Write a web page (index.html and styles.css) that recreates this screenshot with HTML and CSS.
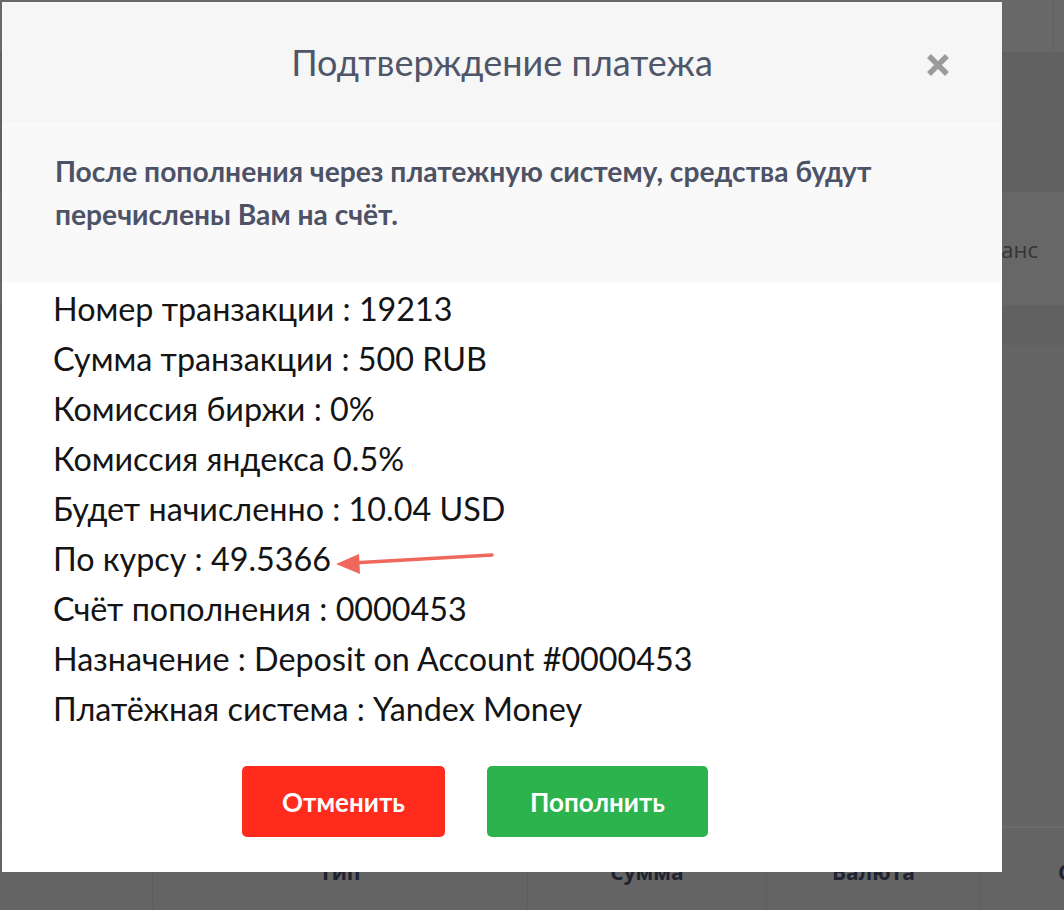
FILE: index.html
```html
<!DOCTYPE html>
<html lang="ru">
<head>
<meta charset="utf-8">
<title>Подтверждение платежа</title>
<link rel="stylesheet" href="styles.css">
</head>
<body>
<div class="page">
  <div class="topbar"><div class="topbar-cell"></div><div class="topbar-cell narrow"></div></div>
  <div class="band dark"></div>
  <div class="band light balance"><span class="balance-text">Баланс</span></div>
  <div class="band dark thin"></div>
  <div class="band mid"></div>
  <div class="table-head">
    <div class="th w1"></div>
    <div class="th w2">Тип</div>
    <div class="th w3">Сумма</div>
    <div class="th w4">Валюта</div>
    <div class="th w5">Статус</div>
  </div>
</div>

<div class="modal">
  <div class="modal-header">
    <h2 class="modal-title">Подтверждение платежа</h2>
    <svg class="modal-close" width="26" height="26" viewBox="0 0 26 26">
      <path d="M4 4 L22 22 M22 4 L4 22" stroke="#9b9b9b" stroke-width="5.5" stroke-linecap="butt"/>
    </svg>
  </div>
  <div class="modal-alert">
    После пополнения через платежную систему, средства будут<br>перечислены Вам на счёт.
  </div>
  <div class="modal-body">
    <div class="row">Номер транзакции : 19213</div>
    <div class="row">Сумма транзакции : 500 RUB</div>
    <div class="row">Комиссия биржи : 0%</div>
    <div class="row">Комиссия яндекса 0.5%</div>
    <div class="row">Будет начисленно : 10.04 USD</div>
    <div class="row">По курсу : 49.5366</div>
    <div class="row">Счёт пополнения : 0000453</div>
    <div class="row">Назначение : Deposit on Account #0000453</div>
    <div class="row">Платёжная система : Yandex Money</div>
  </div>
  <div class="modal-footer">
    <button class="btn btn-cancel">Отменить</button>
    <button class="btn btn-ok">Пополнить</button>
  </div>
  <svg class="arrow" width="180" height="30" viewBox="0 0 180 30">
    <line x1="160" y1="7" x2="20" y2="15" stroke="#f0685c" stroke-width="3.5" stroke-linecap="round"/>
    <polygon points="4,16 27,6 28,26" fill="#f0685c"/>
  </svg>
</div>
</body>
</html>
```

FILE: styles.css
```css
html, body {
  margin: 0;
  padding: 0;
}
body {
  width: 1064px;
  height: 910px;
  overflow: hidden;
  background: #656565;
  font-family: Lato, "Noto Sans", sans-serif;
  position: relative;
}
.page {
  display: flex;
  flex-direction: column;
  height: 910px;
}
.topbar {
  height: 52px;
  flex-shrink: 0;
  background: #686868;
  display: flex;
  justify-content: flex-end;
}
.topbar-cell {
  flex: 1;
}
.topbar-cell.narrow {
  flex: 0 0 10px;
  border-left: 1px solid #606060;
}
.band {
  height: 140px;
  flex-shrink: 0;
}
.band.dark { background: #616161; }
.band.light { background: #676767; height: 113px; }
.band.thin { height: 40px; }
.band.mid { background: #656565; flex: 1 1 auto; height: auto; }
.balance {
  display: flex;
  align-items: center;
  justify-content: flex-end;
  padding-right: 26px;
}
.balance-text {
  font-family: "Open Sans", sans-serif;
  font-size: 22px;
  color: #353535;
}
.table-head {
  height: 82px;
  flex-shrink: 0;
  display: flex;
  border-top: 2px solid #6b6b6b;
  background: #646464;
  overflow: hidden;
}
.th {
  flex-shrink: 0;
  box-sizing: border-box;
  border-right: 1px solid #5e5e5e;
  display: flex;
  justify-content: center;
  padding-top: 30px;
  font-family: "Open Sans", sans-serif;
  font-weight: 700;
  font-size: 21px;
  color: #1f2330;
  white-space: nowrap;
}
.w1 { width: 153px; }
.w2 { width: 375px; }
.w3 { width: 239px; }
.w4 { width: 214px; }
.w5 { width: 200px; justify-content: flex-start; padding-left: 77px; border-right: 0; }

.modal {
  position: absolute;
  left: 2px;
  top: 2px;
  width: 1000px;
  height: 870px;
  background: #fff;
  display: flex;
  flex-direction: column;
}
.modal-header {
  height: 120px;
  flex-shrink: 0;
  background: #f6f6f6;
  display: flex;
  align-items: center;
  justify-content: center;
  position: relative;
}
.modal-title {
  margin: 0;
  font-weight: 400;
  font-size: 36px;
  color: #50566a;
}
.modal-close {
  position: absolute;
  left: 923px;
  top: 50px;
}
.modal-alert {
  height: 160px;
  flex-shrink: 0;
  box-sizing: border-box;
  background: #f9f9f9;
  padding: 28px 53px 0;
  font-weight: 700;
  font-size: 28.2px;
  line-height: 43px;
  color: #4d5266;
}
.modal-body {
  padding: 2px 51px 0;
}
.row {
  font-size: 32.3px;
  line-height: 50px;
  color: #141414;
}
.modal-footer {
  display: flex;
  gap: 42px;
  padding: 32px 0 0 240px;
}
.btn {
  height: 71px;
  border: 0;
  border-radius: 5px;
  color: #fff;
  font-family: Lato, sans-serif;
  font-weight: 700;
  font-size: 26px;
  cursor: pointer;
}
.btn-cancel {
  width: 203px;
  background: #ff2b1c;
}
.btn-ok {
  width: 221px;
  background: #2db34d;
}
.arrow {
  position: absolute;
  left: 330px;
  top: 546px;
}
```
